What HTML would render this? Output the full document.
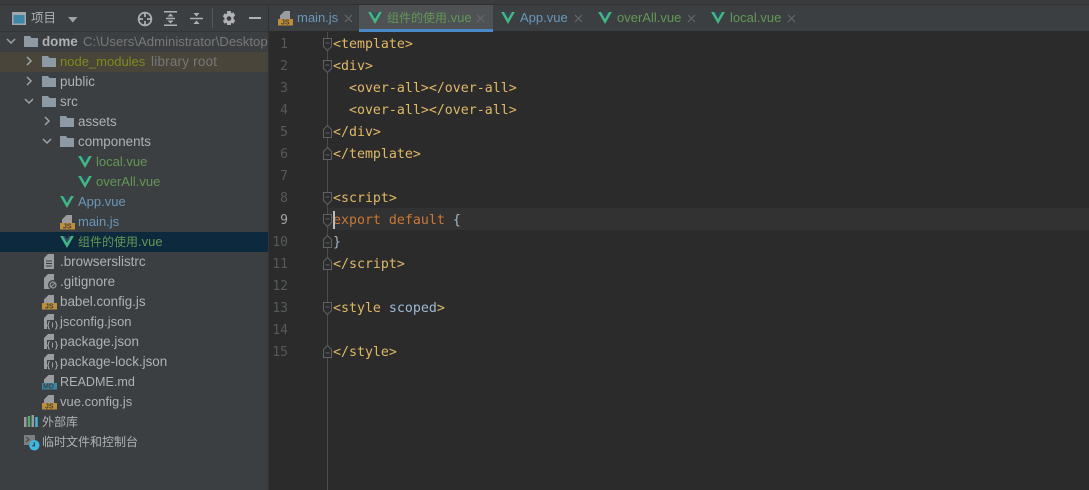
<!DOCTYPE html>
<html><head><meta charset="utf-8"><style>
html,body{margin:0;padding:0;background:#2b2b2b}
#r{position:relative;width:1089px;height:490px;overflow:hidden;background:#2b2b2b;font-family:"Liberation Sans","Noto Sans CJK SC",sans-serif}
#r div,#r svg,#r span.a{position:absolute}
.side{left:0;top:0;width:268px;height:490px;background:#3c3f41;overflow:hidden}
.row{left:0;width:268px;height:20px;line-height:20px;font-size:13.4px;color:#afb1b3;white-space:nowrap;overflow:hidden}
.row span.t{position:absolute;top:0}
.g{color:#629755}.b{color:#6897bb}.y{color:#7f8b1d}.m{color:#787878}
.cj{font-size:12px}
.s13{font-size:13px}
.tab{top:4px;height:27px;line-height:27px;font-size:13px;white-space:nowrap}
.code{left:333px;margin-top:1px;font-family:"DejaVu Sans Mono",monospace;font-size:13.28px;height:22px;line-height:22px;white-space:pre;color:#e0b966}
.num{left:270px;margin-top:1px;width:18px;text-align:right;font-family:"DejaVu Sans Mono",monospace;font-size:13px;height:22px;line-height:22px;color:#56595b}
</style></head><body><div id="r">
<svg width="0" height="0" style="left:0;top:0"><defs>
<symbol id="f" viewBox="0 0 14 11"><path d="M0 0h6l1.500 2H14v9H0z" fill="#8d9aa3"/></symbol>
<symbol id="v" viewBox="0 0 16 14"><path d="M0 0h3.400L8 8l4.600-8H16L8 14z" fill="#41b883"/><path d="M3.400 0h2.600L8 3.600 10 0h2.600L8 8z" fill="#35495e"/></symbol>
<symbol id="c" viewBox="0 0 10 10"><path d="M3 1l4 4-4 4" fill="none" stroke="#a0a3a5" stroke-width="1.500"/></symbol>
<symbol id="o" viewBox="0 0 10 10"><path d="M1 3l4 4 4-4" fill="none" stroke="#a0a3a5" stroke-width="1.500"/></symbol>
<symbol id="x" viewBox="0 0 9 9"><path d="M1 1l7 7M8 1L1 8" stroke="#65686a" stroke-width="1.200" fill="none"/></symbol>
<symbol id="fo" viewBox="0 0 9 13"><path d="M.5.500h8v8l-4 4-4-4zM2.500 5h4" fill="#2b2b2b" stroke="#606366" stroke-width="1"/></symbol>
<symbol id="fc" viewBox="0 0 9 13"><path d="M.5 12.500h8v-8l-4-4-4 4zM2.500 8h4" fill="#2b2b2b" stroke="#606366" stroke-width="1"/></symbol>
<symbol id="js" viewBox="0 0 15 16"><path d="M2 1h10v8H2z" fill="#9a9c9e"/><path d="M2 1h4.500L2 5.500z" fill="#3c3f41"/><rect y="9" width="15" height="6.500" fill="#bf8e37"/><text x="3" y="14.500" font-size="7" font-weight="bold" font-family="Liberation Sans" fill="#3c3f41">JS</text></symbol>
<symbol id="md" viewBox="0 0 15 16"><path d="M2 1h10v8H2z" fill="#9a9c9e"/><path d="M2 1h4.500L2 5.500z" fill="#3c3f41"/><rect y="9" width="15" height="6.500" fill="#3c87a8"/><text x="1" y="14.500" font-size="7" font-weight="bold" font-family="Liberation Sans" fill="#3c3f41">MD</text></symbol>
<symbol id="jn" viewBox="0 0 14 16"><path d="M0 4l4-4h6v15H0z" fill="#9a9c9e"/><rect x="3" y="6" width="11" height="10" fill="#3c3f41"/><path d="M6 7.500Q4.500 7.500 4.500 9v1.500L3.500 11.500l1 1V14Q4.500 15 6 15M11 7.500q1.500 0 1.500 1.500v1.500l1 1-1 1V14q0 1-1.500 1M8.500 8.500v5" fill="none" stroke="#9a9c9e" stroke-width="1.100"/></symbol>
</defs></svg>

<div style="left:0;top:0;width:1089px;height:4px;background:#3a3c3e"></div>
<div class="side" style="top:4px;height:486px"></div>
<div style="left:0;top:4px;width:1089px;height:1px;background:#303132"></div>
<div style="left:0;top:31px;width:268px;height:1px;background:#333537"></div>

<!-- header -->
<svg style="left:12px;top:12px" width="14" height="13" viewBox="0 0 14 13"><rect x=".75" y=".75" width="12.500" height="11.500" fill="#3d87a8" stroke="#a3a7a9" stroke-width="1.500"/><rect x="1" y="1" width="12" height="2" fill="#a3a7a9"/></svg>
<div style="left:31px;top:9px;font-size:12.500px;line-height:18px;color:#afb1b3">项目</div>
<svg style="left:68px;top:17px" width="10" height="6"><path d="M0 0h9.500L4.750 5.500z" fill="#a0a3a5"/></svg>
<svg style="left:136.500px;top:10.500px" width="16" height="16" viewBox="0 0 16 16" fill="none" stroke="#afb1b3" stroke-width="1.700"><circle cx="8" cy="8" r="6.400"/><path d="M8 1v5M8 10v5M1 8h5M10 8h5"/></svg>
<svg style="left:164px;top:11px" width="13" height="15" viewBox="0 0 13 15"><path d="M0 .8h13M0 14.200h13M2 7.500h9" stroke="#afb1b3" stroke-width="1.500"/><path d="M6.500 2.500L9.500 5.500h-6zM6.500 12.500L9.500 9.500h-6z" fill="#afb1b3"/></svg>
<svg style="left:190px;top:11px" width="13" height="15" viewBox="0 0 13 15"><path d="M0 7.500h13" stroke="#afb1b3" stroke-width="1.500"/><path d="M6.500 5.500L9.500 2h-6zM6.500 9.500L9.500 13h-6z" fill="#afb1b3"/></svg>
<div style="left:212px;top:8px;width:1px;height:20px;background:#55585a"></div>
<svg style="left:222px;top:11px" width="14" height="15" viewBox="0 0 14 15"><path d="M5.200 0h3.600l.5 2.200 2.100-.8 1.800 3-1.600 1.600v2l1.600 1.600-1.800 3-2.100-.8-.5 2.200H5.200l-.5-2.200-2.100.8-1.800-3L2.400 9V7L.8 5.400l1.800-3 2.100.8z" fill="#afb1b3"/><circle cx="7" cy="7.500" r="2.300" fill="#3c3f41"/></svg>
<div style="left:249px;top:17px;width:12px;height:2px;background:#afb1b3"></div>

<!-- highlight rows -->
<div style="left:0;top:52px;width:268px;height:20px;background:#49453a"></div>
<div style="left:0;top:232px;width:268px;height:20px;background:#0d293e"></div>

<!-- tree icons -->
<svg style="left:6px;top:36px" width="10" height="10"><use href="#o"/></svg>
<svg style="left:24px;top:56px" width="10" height="10"><use href="#c"/></svg>
<svg style="left:24px;top:76px" width="10" height="10"><use href="#c"/></svg>
<svg style="left:24px;top:96px" width="10" height="10"><use href="#o"/></svg>
<svg style="left:42px;top:116px" width="10" height="10"><use href="#c"/></svg>
<svg style="left:42px;top:136px" width="10" height="10"><use href="#o"/></svg>

<svg style="left:24px;top:36px" width="14" height="11"><use href="#f"/></svg>
<svg style="left:42px;top:56px" width="14" height="11"><use href="#f"/></svg>
<svg style="left:42px;top:76px" width="14" height="11"><use href="#f"/></svg>
<svg style="left:42px;top:96px" width="14" height="11"><use href="#f"/></svg>
<svg style="left:60px;top:116px" width="14" height="11"><use href="#f"/></svg>
<svg style="left:60px;top:136px" width="14" height="11"><use href="#f"/></svg>

<svg style="left:78px;top:156px" width="14" height="12"><use href="#v"/></svg>
<svg style="left:78px;top:176px" width="14" height="12"><use href="#v"/></svg>
<svg style="left:60px;top:196px" width="14" height="12"><use href="#v"/></svg>
<svg style="left:60px;top:236px" width="14" height="12"><use href="#v"/></svg>

<svg style="left:60px;top:214px" width="15" height="16"><use href="#js"/></svg>
<svg style="left:42px;top:294px" width="15" height="16"><use href="#js"/></svg>
<svg style="left:42px;top:394px" width="15" height="16"><use href="#js"/></svg>
<svg style="left:42px;top:374px" width="15" height="16"><use href="#md"/></svg>

<svg style="left:44px;top:254px" width="10" height="15" viewBox="0 0 10 15"><path d="M0 4l4-4h6v15H0z" fill="#9a9c9e"/><path d="M2 7h6M2 9.500h6M2 12h6" stroke="#3c3f41"/></svg>
<svg style="left:44px;top:274px" width="14" height="16" viewBox="0 0 14 16"><path d="M0 4l4-4h6v15H0z" fill="#9a9c9e"/><circle cx="9" cy="11" r="5" fill="#3c3f41"/><circle cx="9" cy="11" r="3" fill="none" stroke="#9a9c9e" stroke-width="1.200"/><path d="M7 13l4-4" stroke="#9a9c9e"/></svg>
<svg style="left:44px;top:314px" width="14" height="16"><use href="#jn"/></svg>
<svg style="left:44px;top:334px" width="14" height="16"><use href="#jn"/></svg>
<svg style="left:44px;top:354px" width="14" height="16"><use href="#jn"/></svg>
<svg style="left:24px;top:415px" width="15" height="12" viewBox="0 0 15 12"><rect y="2" width="2.500" height="10" fill="#9a9c9e"/><rect x="3.700" y="1" width="2.500" height="11" fill="#59a869"/><rect x="7.500" y="0" width="2.500" height="12" fill="#9a9c9e"/><rect x="11.200" y="2" width="2.500" height="10" fill="#40b6e0"/></svg>
<svg style="left:24px;top:434px" width="16" height="17" viewBox="0 0 16 17"><rect y="1" width="11" height="10" fill="#7c7f81"/><path d="M2 3l3 2.500L2 8" stroke="#3c3f41" fill="none"/><circle cx="10.300" cy="11.300" r="5.200" fill="#40b6e0"/><path d="M10.300 8.300v3.500h-2" stroke="#2b3a42" stroke-width="1.200" fill="none"/></svg>

<!-- tree text -->
<div class="row" style="top:32px"><span class="t" style="left:42px;font-weight:bold">dome</span><span class="t m" style="left:83px;font-size:13.200px">C:\Users\Administrator\Desktop</span></div>
<div class="row" style="top:52px"><span class="t y s13" style="left:60px">node_modules</span><span class="t m" style="left:151px;letter-spacing:.25px">library root</span></div>
<div class="row" style="top:72px"><span class="t" style="left:60px">public</span></div>
<div class="row" style="top:92px"><span class="t" style="left:60px">src</span></div>
<div class="row" style="top:112px"><span class="t" style="left:78px">assets</span></div>
<div class="row" style="top:132px"><span class="t" style="left:78px">components</span></div>
<div class="row" style="top:152px"><span class="t g s13" style="left:96px">local.vue</span></div>
<div class="row" style="top:172px"><span class="t g s13" style="left:96px">overAll.vue</span></div>
<div class="row" style="top:192px"><span class="t b s13" style="left:78px">App.vue</span></div>
<div class="row" style="top:212px"><span class="t b s13" style="left:78px">main.js</span></div>
<div class="row" style="top:232px"><span class="t g s13" style="left:78px"><span class="cj">组件的使用</span>.vue</span></div>
<div class="row" style="top:252px"><span class="t" style="left:60px">.browserslistrc</span></div>
<div class="row" style="top:272px"><span class="t" style="left:60px">.gitignore</span></div>
<div class="row" style="top:292px"><span class="t" style="left:60px">babel.config.js</span></div>
<div class="row" style="top:312px"><span class="t s13" style="left:60px">jsconfig.json</span></div>
<div class="row" style="top:332px"><span class="t" style="left:60px">package.json</span></div>
<div class="row" style="top:352px"><span class="t" style="left:60px">package-lock.json</span></div>
<div class="row" style="top:372px"><span class="t" style="left:60px;font-size:12.600px">README.md</span></div>
<div class="row" style="top:392px"><span class="t s13" style="left:60px">vue.config.js</span></div>
<div class="row" style="top:412px"><span class="t cj" style="left:42px">外部库</span></div>
<div class="row" style="top:432px"><span class="t cj" style="left:42px">临时文件和控制台</span></div>

<!-- tab bar -->
<div style="left:268px;top:5px;width:1px;height:485px;background:#323232"></div>
<div style="left:269px;top:5px;width:820px;height:26px;background:#3c3f41"></div>
<div style="left:359px;top:5px;width:134px;height:24px;background:#4e5254"></div>
<div style="left:359px;top:29px;width:134px;height:3px;background:#4a88c7"></div>

<svg style="left:278px;top:10px" width="15" height="16"><use href="#js"/></svg>
<div class="tab b" style="left:297px">main.js</div>
<svg style="left:344px;top:14px" width="9" height="9"><use href="#x"/></svg>
<svg style="left:368px;top:12px" width="14" height="12"><use href="#v"/></svg>
<div class="tab g" style="left:387px"><span class="cj">组件的使用</span>.vue</div>
<svg style="left:476px;top:14px" width="9" height="9"><use href="#x"/></svg>
<svg style="left:501px;top:12px" width="14" height="12"><use href="#v"/></svg>
<div class="tab b" style="left:520px">App.vue</div>
<svg style="left:574px;top:14px" width="9" height="9"><use href="#x"/></svg>
<svg style="left:598px;top:12px" width="14" height="12"><use href="#v"/></svg>
<div class="tab g" style="left:617px">overAll.vue</div>
<svg style="left:687px;top:14px" width="9" height="9"><use href="#x"/></svg>
<svg style="left:711px;top:12px" width="14" height="12"><use href="#v"/></svg>
<div class="tab g" style="left:730px">local.vue</div>
<svg style="left:787px;top:14px" width="9" height="9"><use href="#x"/></svg>

<!-- editor -->
<div style="left:328px;top:208px;width:761px;height:22px;background:#323232"></div>
<div style="left:327px;top:32px;width:1px;height:458px;background:#4b4d4f"></div>

<div class="num" style="top:33px">1</div><div class="num" style="top:55px">2</div><div class="num" style="top:77px">3</div><div class="num" style="top:99px">4</div><div class="num" style="top:121px">5</div><div class="num" style="top:143px">6</div><div class="num" style="top:165px">7</div><div class="num" style="top:187px">8</div><div class="num" style="top:209px;color:#a4a3a3">9</div><div class="num" style="top:231px">10</div><div class="num" style="top:253px">11</div><div class="num" style="top:275px">12</div><div class="num" style="top:297px">13</div><div class="num" style="top:319px">14</div><div class="num" style="top:341px">15</div>

<svg style="left:323px;top:38px" width="9" height="13"><use href="#fo"/></svg>
<svg style="left:323px;top:60px" width="9" height="13"><use href="#fo"/></svg>
<svg style="left:323px;top:125px" width="9" height="13"><use href="#fc"/></svg>
<svg style="left:323px;top:147px" width="9" height="13"><use href="#fc"/></svg>
<svg style="left:323px;top:192px" width="9" height="13"><use href="#fo"/></svg>
<svg style="left:323px;top:214px" width="9" height="13"><use href="#fo"/></svg>
<svg style="left:323px;top:235px" width="9" height="13"><use href="#fc"/></svg>
<svg style="left:323px;top:257px" width="9" height="13"><use href="#fc"/></svg>
<svg style="left:323px;top:302px" width="9" height="13"><use href="#fo"/></svg>
<svg style="left:323px;top:345px" width="9" height="13"><use href="#fc"/></svg>

<div class="code" style="top:33px">&lt;template&gt;</div>
<div class="code" style="top:55px">&lt;div&gt;</div>
<div class="code" style="top:77px">  &lt;over-all&gt;&lt;/over-all&gt;</div>
<div class="code" style="top:99px">  &lt;over-all&gt;&lt;/over-all&gt;</div>
<div class="code" style="top:121px">&lt;/div&gt;</div>
<div class="code" style="top:143px">&lt;/template&gt;</div>
<div class="code" style="top:187px">&lt;script&gt;</div>
<div class="code" style="top:209px;color:#cc7832">export default <span style="color:#a9b7c6">{</span></div>
<div class="code" style="top:231px;color:#a9b7c6">}</div>
<div class="code" style="top:253px">&lt;/script&gt;</div>
<div class="code" style="top:297px">&lt;style <span style="color:#9fb9d4">scoped</span>&gt;</div>
<div class="code" style="top:341px">&lt;/style&gt;</div>
<div style="left:333px;top:211px;width:2px;height:18px;background:#bbbbbb"></div>
</div></body></html>
